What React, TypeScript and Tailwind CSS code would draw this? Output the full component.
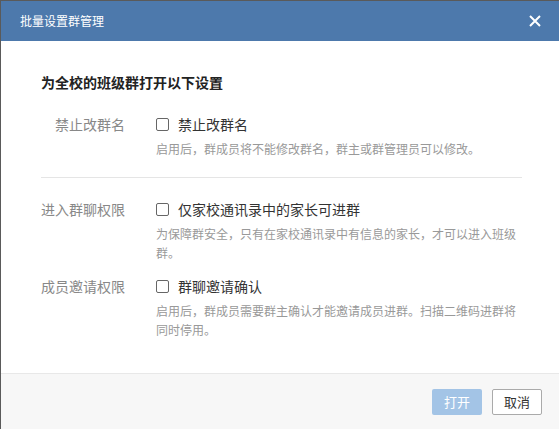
import React from 'react'

const rows = [
  {
    label: '禁止改群名',
    option: '禁止改群名',
    desc: '启用后，群成员将不能修改群名，群主或群管理员可以修改。',
  },
  {
    label: '进入群聊权限',
    option: '仅家校通讯录中的家长可进群',
    desc: '为保障群安全，只有在家校通讯录中有信息的家长，才可以进入班级群。',
  },
  {
    label: '成员邀请权限',
    option: '群聊邀请确认',
    desc: '启用后，群成员需要群主确认才能邀请成员进群。扫描二维码进群将同时停用。',
  },
]

const Row = ({ label, option, desc }: { label: string; option: string; desc: string }) => (
  <div className="flex">
    <div className="w-[84px] shrink-0 text-right text-[14px] leading-[20px] text-[#888]">{label}</div>
    <div className="ml-[31px] flex-1">
      <label className="flex items-center text-[14px] leading-[20px] text-[#333]">
        <span className="w-[13px] h-[13px] border border-[#666] rounded-[2px] bg-white" />
        <span className="ml-[9px]">{option}</span>
      </label>
      <p className="mt-[5px] text-[12px] leading-[19px] text-[#999]">{desc}</p>
    </div>
  </div>
)

const App = () => {
  return (
    <div
      className="w-[559px] h-[429px] bg-[#5a5a5a] pl-px pt-px overflow-hidden"
      style={{ fontFamily: '"Noto Sans CJK SC", "Noto Sans", sans-serif' }}
    >
      <div className="w-[558px] h-[428px] bg-white flex flex-col">
        <div className="h-[40px] bg-[#4d79ac] flex items-center justify-between pl-[19px] pr-[18px]">
          <span className="text-white text-[12px]">批量设置群管理</span>
          <svg width="12" height="12" viewBox="0 0 12 12">
            <path d="M1 1 L11 11 M11 1 L1 11" stroke="#fff" strokeWidth="2" />
          </svg>
        </div>
        <div className="flex-1 pl-[40px] pr-[37px] pt-[31px]">
          <h2 className="text-[14px] leading-[20px] font-bold text-[#222]">为全校的班级群打开以下设置</h2>
          <div className="mt-[22px]">
            <Row {...rows[0]} />
          </div>
          <div className="mt-[19px] h-px bg-[#e5e5e5]" />
          <div className="mt-[21px]">
            <Row {...rows[1]} />
          </div>
          <div className="mt-[14px]">
            <Row {...rows[2]} />
          </div>
        </div>
        <div className="h-[56px] border-t border-[#e8e8e8] bg-[#f7f7f7] flex items-center justify-end gap-[10px] pr-[17px]">
          <button className="w-[50px] h-[26px] rounded-[2px] bg-[#a3c4e6] text-white text-[13px]">打开</button>
          <button className="w-[50px] h-[26px] rounded-[2px] bg-white border border-[#aaa] text-[#333] text-[13px]">取消</button>
        </div>
      </div>
    </div>
  )
}

export default App
